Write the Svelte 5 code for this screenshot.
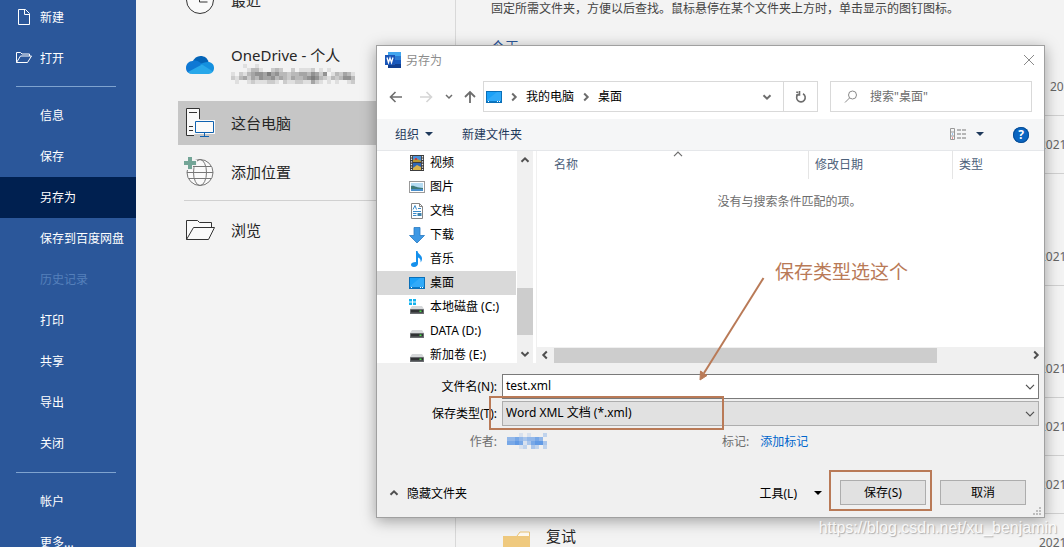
<script>
  const topItems = [
    { label: "新建", icon: "new" },
    { label: "打开", icon: "open" }
  ];
  const midItems = [
    "信息",
    "保存",
    "另存为",
    "保存到百度网盘",
    "历史记录",
    "打印",
    "共享",
    "导出",
    "关闭"
  ];
  const bottomItems = ["帐户", "更多..."];

  const folders = [
    { name: "视频", icon: "video" },
    { name: "图片", icon: "picture" },
    { name: "文档", icon: "document" },
    { name: "下载", icon: "download" },
    { name: "音乐", icon: "music" },
    { name: "桌面", icon: "desktop" },
    { name: "本地磁盘 (C:)", icon: "system" },
    { name: "DATA (D:)", icon: "disk" },
    { name: "新加卷 (E:)", icon: "disk" }
  ];

  // Recent folders, one list per day group.
  const recents = [
    [{ date: "2021" }, { date: "2021" }],
    [{ date: "2021" }],
    [{ date: "2021" }, { date: "2021" }, { date: "2021" }, { name: "复试", date: "2021" }]
  ];

  // Each digit is the darkness of one block, 0 is empty.
  const mailBlocks = [
    "0001001000000000000000000000000",
    "0000133100232002011120101000000",
    "1021345546453323344354250132431",
    "2134243544534324334565321323553",
    "0100121112210211221142101010012"
  ];
  const authorBlocks = [
    "0001010002",
    "4454344540",
    "5565135663",
    "0001203202"
  ];

  let current = "另存为";
  let folder = "桌面";
  let fileName = "test.xml";
  let fileType = "xml";
  let search = "";
</script>

{#snippet mosaic(rows, color)}
  <svg class="mosaic" width={rows[0].length * 4} height={rows.length * 4} aria-hidden="true">
    {#each rows as row, y}
      {#each row as level, x}
        <rect x={x * 4} y={y * 4} width="4" height="4" fill={color} opacity={level / 9} />
      {/each}
    {/each}
  </svg>
{/snippet}

{#snippet chevron(dir)}
  <svg class="chevron {dir}" width="10" height="10" viewBox="0 0 10 10" aria-hidden="true">
    <path d="M1.500 3.200 5 6.700 8.500 3.200" fill="none" stroke="currentColor" stroke-width="2" />
  </svg>
{/snippet}

{#snippet thin()}
  <svg class="thin" width="10" height="6" viewBox="0 0 10 6" aria-hidden="true">
    <path d="M1 .8 5 4.800 9 .8" fill="none" stroke="currentColor" stroke-width="1.200" />
  </svg>
{/snippet}

{#snippet fileIcon(name)}
  <svg width="16" height="16" viewBox="0 0 16 16" aria-hidden="true">
    {#if name === "video"}
      <rect x="1" y="0" width="14" height="16" fill="#3c3c3c" />
      <path d="M2.500 1v14M13.500 1v14" stroke="#e8e8e8" stroke-width="1.300" stroke-dasharray="1.400 1.200" />
      <rect x="4" y="1" width="8" height="6" fill="#4a90d9" />
      <rect x="4" y="8" width="8" height="7" fill="#2f66b5" />
      <path d="M4 5l3-2 5 3v1H4z" fill="#b9962f" />
      <path d="M4 13l4-3 4 2v3H4z" fill="#d8b24a" />
      <rect x="6" y="3" width="2" height="2" fill="#c63a4c" />
    {:else if name === "picture"}
      <rect x=".5" y="2.500" width="15" height="11" fill="#fff" stroke="#9a9a9a" />
      <rect x="2" y="4" width="12" height="8" fill="#b5dcf3" />
      <path d="M2 7c3-1 5 2 12 2v3H2z" fill="#3e7a78" />
      <path d="M2 10h12v2H2z" fill="#4a8fcb" />
    {:else if name === "document"}
      <path d="M2.500.5h8l3 3v12h-11z" fill="#fff" stroke="#858585" />
      <path d="M10.500.5v3h3" fill="none" stroke="#858585" />
      <path d="M4 6.500 6 2.500l1.500 4M9 5.500h3M4 8.500h8M4 10.500h3.500M4 12.500h3.500" stroke="#3b8bc9" fill="none" />
      <rect x="8.500" y="10" width="4" height="3" fill="#3f83ad" />
    {:else if name === "download"}
      <path d="M5 .5h6v8h4.500L8 16 .5 8.500H5z" fill="#3d98e4" stroke="#2a7ac2" stroke-width=".8" />
    {:else if name === "music"}
      <path d="M7 0h1.500c.3 3 4.500 4 4.500 7.500 0 2-.7 3-1.500 4 .6-3-.8-4.500-2.500-5v6c0 2-1.800 3.500-4 3.500S2 15 2 13.500 4 11 7 11z" fill="#1590ec" />
    {:else if name === "desktop"}
      <rect x=".5" y="2.500" width="15" height="11" fill="#1ba1f8" stroke="#0a6fb8" />
      <path d="M1 11 11 3h4v9H1z" fill="#45b3fa" opacity=".5" />
      <path d="M1 12.500h14" stroke="#0a78c4" />
      <path d="M2 12.500h1M11 12.500h1M13 12.500h1" stroke="#fff" />
    {:else}
      {#if name === "system"}
        <path d="M0 0h3v2.500H0zM4 0h3v2.500H4zM0 3.500h3V6H0zM4 3.500h3V6H4z" fill="#13b2ee" />
      {/if}
      <path d="M3 7h10l2 3H1z" fill="#d6d8da" />
      <rect x="1" y="10" width="14" height="5" rx=".6" fill="#6a6d70" />
      <rect x="2" y="11" width="12" height="2.500" fill="#303234" />
      <rect x="10.500" y="11.500" width="2" height="1.500" fill="#48e04a" />
    {/if}
  </svg>
{/snippet}

<div class="backstage">
  <nav class="menu" aria-label="文件">
    {#each topItems as item}
      <button class="menu-item">
        <svg width="16" height="16" viewBox="0 0 16 16" fill="none" stroke="#fff" aria-hidden="true">
          {#if item.icon === "new"}
            <path d="M2.500.5h7l4 4v11h-11zM8.500.5v5h5" />
          {:else}
            <path d="M.5 12.500v-10h4l1.500 1.500h7.500v2M.5 12.500l4-6.500h11l-4 6.500z" />
          {/if}
        </svg>
        {item.label}
      </button>
    {/each}
    <hr />
    {#each midItems as label}
      <button
        class="menu-item"
        class:active={label === current}
        disabled={label === "历史记录"}
        on:click={() => (current = label)}>{label}</button>
    {/each}
    <hr />
    {#each bottomItems as label}
      <button class="menu-item">{label}</button>
    {/each}
  </nav>

  <section class="places">
    <button class="place">
      <svg width="30" height="30" viewBox="0 0 30 30" fill="none" stroke="#333" aria-hidden="true">
        <circle cx="15" cy="16" r="13.500" fill="#fafafa" />
        <path d="M14.500 6v12h8" />
      </svg>
      最近
    </button>
    <button class="place account">
      <svg width="30" height="30" viewBox="0 0 30 30" aria-hidden="true">
        <path d="M7.500 12C9 8 12 6 15.500 6c4 0 7 2 8 6l-5 5z" fill="#0364b8" />
        <path d="M7.500 11c3-1 5.500 0 7.500 1.500l6 4L6 23.500c-3 0-5-2.500-5-5.500 0-4 3-7 6.500-7z" fill="#0f78d4" />
        <path d="M23 12c3.500 0 6 2.500 6 6 0 1.500-.5 3-1.500 4L15 14.500c2-1.500 5-2.500 8-2.500z" fill="#1490df" />
        <path d="M3 22 17 14.500 28 21.500c-1 1.500-2.500 2.500-4.500 2.500H7c-1.500 0-3-1-4-2z" fill="#28a8ea" />
      </svg>
      <span>
        OneDrive - 个人
        {@render mosaic(mailBlocks, "#444")}
      </span>
    </button>
    <button class="place selected">
      <svg width="30" height="30" viewBox="0 0 30 30" fill="none" aria-hidden="true">
        <path d="M9 28.500H1.500v-27h13V12" fill="#fafafa" stroke="#333" />
        <path d="M4 5.500h8M4 19.500h4M4 23.500h4" stroke="#333" />
        <rect x="9" y="13" width="21" height="14" fill="#fafafa" />
        <path d="M10.500 14.500h18v11h-18zM19.500 26v3M15 29.500h9" stroke="#0f62b0" />
      </svg>
      这台电脑
    </button>
    <button class="place">
      <svg width="30" height="30" viewBox="0 0 30 30" fill="none" stroke="#777" aria-hidden="true">
        <circle cx="15" cy="16.500" r="13" fill="#fafafa" />
        <ellipse cx="15" cy="16.500" rx="6.500" ry="13" />
        <path d="M2 16.500h26M4 10.500h22M4 22.500h22" />
        <path d="M-2 4h4V0h6v4h4v6H8v4H2v-4h-4z" fill="#f3f3f3" stroke="none" />
        <path d="M-1 5h4V1h4v4h4v4H7v4H3V9h-4z" fill="#73a597" stroke="none" />
      </svg>
      添加位置
    </button>
    <hr />
    <button class="place">
      <svg width="30" height="30" viewBox="0 0 30 30" fill="none" stroke="#333" aria-hidden="true">
        <path d="M1.500 25.500V6.500h11l2 2h12v5M1.500 25.500l7-12h21l-6 12z" fill="#fafafa" />
      </svg>
      浏览
    </button>
  </section>

  <section class="recent">
    <p>固定所需文件夹，方便以后查找。鼠标悬停在某个文件夹上方时，单击显示的图钉图标。</p>
    <h2>今天</h2>
    {#each recents as group}
      <ul>
        {#each group as row}
          <li>
            {#if row.name}
              <svg width="27" height="24" viewBox="0 0 27 24" aria-hidden="true">
                <path d="M14 5l3-4h9.500v6" fill="#fffaf0" stroke="#ecc679" />
                <path d="M0 5h27v19H0z" fill="#efc97e" />
              </svg>
              <span class="name">{row.name}</span>
            {/if}
            <span class="date">{row.date}</span>
          </li>
        {/each}
      </ul>
    {/each}
  </section>

  <div class="dialog" role="dialog" aria-labelledby="dialog-title">
    <header class="titlebar">
      <svg width="16" height="16" viewBox="0 0 16 16" aria-hidden="true">
        <rect x="3" width="13" height="4" fill="#41a5ee" />
        <rect x="3" y="4" width="13" height="4" fill="#2b7cd3" />
        <rect x="3" y="8" width="13" height="4" fill="#185abd" />
        <rect x="3" y="12" width="13" height="4" fill="#103f91" />
        <rect y="3" width="10" height="10" fill="#1a56b8" />
        <path d="M2 5.500 3.500 10.500 5 6l1.500 4.500L8 5.500" fill="none" stroke="#fff" stroke-width="1.300" />
      </svg>
      <span id="dialog-title">另存为</span>
      <button class="close" aria-label="关闭">
        <svg width="12" height="12" viewBox="0 0 12 12" stroke="#8a8a8a"><path d="M1 1l10 10M11 1 1 11" /></svg>
      </button>
    </header>

    <div class="navbar">
      <div class="history">
        <button aria-label="后退">
          <svg width="14" height="14" viewBox="0 0 14 14" fill="none" stroke="#6d6d6d" stroke-width="1.600"><path d="M13 7H2M6.500 2 1.500 7l5 5" /></svg>
        </button>
        <button class="forward" aria-label="前进" disabled>
          <svg width="14" height="14" viewBox="0 0 14 14" fill="none" stroke="#d5d5d5" stroke-width="1.600"><path d="M1 7h11M7.500 2l5 5-5 5" /></svg>
        </button>
        <button class="pages" aria-label="最近浏览的位置">
          <svg width="8" height="6" viewBox="0 0 8 6" fill="none" stroke="#6d6d6d" stroke-width="1.500"><path d="M1 1l3 3 3-3" /></svg>
        </button>
        <button class="parent" aria-label="上移">
          <svg width="14" height="14" viewBox="0 0 14 14" fill="none" stroke="#6d6d6d" stroke-width="1.800"><path d="M7 13V2M2 7l5-5 5 5" /></svg>
        </button>
      </div>
      <div class="address">
        {@render fileIcon("desktop")}
        <span class="sep">{@render chevron("right")}</span>
        <a href="#computer">我的电脑</a>
        <span class="sep">{@render chevron("right")}</span>
        <a href="#desktop">桌面</a>
        <button class="drop" aria-label="以前的位置">{@render chevron("down")}</button>
        <button class="refresh" aria-label="刷新">
          <svg width="12" height="12" viewBox="0 0 12 12" fill="none" stroke="#6d6d6d" stroke-width="1.600">
            <path d="M8 2.800A4.300 4.300 0 1 1 3.500 3M3.200 1.200h-2M4.500 0v4H1" />
          </svg>
        </button>
      </div>
      <label class="search">
        <svg width="14" height="14" viewBox="0 0 14 14" fill="none" stroke="#8a8a8a"><circle cx="8.500" cy="5" r="4" /><path d="M5.500 8 1 12.500" /></svg>
        <input aria-label="搜索桌面" placeholder={'搜索"桌面"'} bind:value={search} />
      </label>
    </div>

    <div class="toolbar">
      <button>组织 <i class="caret"></i></button>
      <button>新建文件夹</button>
      <button class="view" aria-label="更改视图">
        <svg width="17" height="14" viewBox="0 0 17 14" fill="none">
          <path d="M.5 1.500h4v11h-4zM.5 5h4M.5 9h4" stroke="#999" />
          <path d="M7 3h4M12 3h4M7 7h4M12 7h4M7 11h4M12 11h4" stroke="#777" />
          <path d="M2 7h1" stroke="#3a8de0" /><path d="M2 11h1" stroke="#d33" />
        </svg>
        <i class="caret"></i>
      </button>
      <button class="help" aria-label="帮助">?</button>
    </div>

    <div class="browser">
      <ul class="tree">
        {#each folders as f}
          <li>
            <button class:picked={f.name === folder} on:click={() => (folder = f.name)}>
              {@render fileIcon(f.icon)}
              <span>{f.name}</span>
            </button>
          </li>
        {/each}
      </ul>
      <div class="vscroll">
        {@render chevron("up")}
        <span class="thumb"></span>
        {@render chevron("down")}
      </div>
      <div class="files">
        <table>
          <thead>
            <tr>
              <th class="col-name">名称 <span class="sort">{@render thin()}</span></th>
              <th class="col-date">修改日期</th>
              <th class="col-type">类型</th>
            </tr>
          </thead>
          <tbody>
            <tr><td colspan="3">没有与搜索条件匹配的项。</td></tr>
          </tbody>
        </table>
        <div class="hscroll">
          {@render chevron("left")}
          <span class="track"><span class="thumb"></span></span>
          {@render chevron("right")}
        </div>
      </div>
    </div>

    <div class="form">
      <label for="file-name">文件名(N):</label>
      <div class="combo">
        <input id="file-name" bind:value={fileName} />
        {@render thin()}
      </div>
      <label for="file-type">保存类型(T):</label>
      <div class="combo">
        <select id="file-type" bind:value={fileType}>
          <option value="xml">Word XML 文档 (*.xml)</option>
          <option value="docx">Word 文档 (*.docx)</option>
        </select>
        {@render thin()}
        <span class="mark type-mark"></span>
      </div>
      <span class="meta-label">作者:</span>
      <div class="meta">
        <span class="author">{@render mosaic(authorBlocks, "#1a6fe0")}</span>
        <span>标记:</span>
        <a href="#tags">添加标记</a>
      </div>
    </div>

    <footer>
      <button class="fold">{@render chevron("up")} 隐藏文件夹</button>
      <button class="tools">工具(L) <i class="caret"></i></button>
      <div class="save">
        <button class="push">保存(S)</button>
        <span class="mark save-mark"></span>
      </div>
      <button class="push">取消</button>
    </footer>

    <svg class="grip" width="9" height="9" viewBox="0 0 9 9" fill="#bdbdbd" aria-hidden="true">
      <path d="M6 0h2v2H6zM3 3h2v2H3zM6 3h2v2H6zM0 6h2v2H0zM3 6h2v2H3zM6 6h2v2H6z" />
    </svg>

    <svg class="arrow" width="68" height="106" viewBox="0 0 68 106" aria-hidden="true">
      <path d="M64.500 1 5 96" stroke="#b97a57" stroke-width="2" />
      <path d="M1 103 1.500 94 8 98.500z" fill="#b97a57" stroke="#b97a57" />
    </svg>
    <p class="note">保存类型选这个</p>
  </div>

  <p class="watermark">https://blog.csdn.net/xu_benjamin</p>
</div>

<style>
  :global(body) {
    font-family: "Noto Sans", "Noto Sans CJK SC", sans-serif;
    font-size: 12px;
    color: #000;
  }

  button {
    font: inherit;
    color: inherit;
    background: none;
    border: 0;
    padding: 0;
    text-align: left;
  }

  svg {
    display: block;
    flex: none;
  }

  a {
    color: inherit;
    text-decoration: none;
  }

  ul {
    list-style: none;
    margin: 0;
    padding: 0;
  }

  p {
    margin: 0;
  }

  .backstage {
    position: relative;
    display: flex;
    height: 100vh;
    overflow: hidden;
    background: #f3f3f3;
  }

  /* blue menu */
  .menu {
    flex: 0 0 136px;
    display: flex;
    flex-direction: column;
    margin-top: -4px;
    background: #2b579a;
    color: #fff;
  }

  .menu hr {
    flex: none;
    height: 1px;
    margin: 8px 20px 8px 16px;
    border: 0;
    background: #7fa3cf;
  }

  .menu-item {
    flex: none;
    display: flex;
    align-items: center;
    gap: 8px;
    box-sizing: border-box;
    height: 41px;
    padding: 0 0 2px 40px;
  }

  .menu-item:has(svg) {
    padding: 0 0 0 16px;
  }

  .menu-item:disabled {
    color: #5580bb;
  }

  .menu-item.active {
    background: #002050;
  }

  /* places */
  .places {
    flex: 0 0 320px;
    box-sizing: border-box;
    padding-left: 42px;
    margin-top: -22px;
    border-right: 1px solid #d8d8d8;
    color: #262626;
    font-size: 15px;
  }

  .place {
    display: flex;
    align-items: center;
    gap: 16px;
    box-sizing: border-box;
    width: 100%;
    height: 44px;
    padding: 0 0 2px 7px;
    margin-bottom: 5px;
  }

  .place svg {
    overflow: visible;
  }

  .place.account {
    padding-bottom: 0;
    margin: 21px 0 14px;
  }

  .account span {
    line-height: 18px;
  }

  .place.selected {
    background: #c6c6c6;
  }

  .places hr {
    height: 1px;
    margin: 6px 0 7px 6px;
    border: 0;
    background: #d0d0d0;
  }

  /* recent folders */
  .recent {
    flex: 1;
    padding-left: 35px;
    color: #444;
  }

  .recent p {
    line-height: 18px;
    white-space: nowrap;
  }

  .recent h2 {
    margin: 18px 0 0;
    font-size: 14px;
    font-weight: 400;
    line-height: 22px;
    color: #2b579a;
  }

  .recent ul + ul {
    margin-top: 54px;
  }

  .recent li {
    display: flex;
    align-items: center;
    gap: 16px;
    height: 57px;
    padding-left: 12px;
    border-bottom: 1px solid #d0d0d0;
  }

  .recent .name {
    margin-bottom: 14px;
    font-size: 15px;
    color: #262626;
  }

  .recent .date {
    flex: 0 0 25px;
    min-width: 0;
    margin-left: auto;
    color: #666;
  }

  .recent h2 + ul li:first-child .date {
    flex-basis: 14px;
  }

  /* dialog */
  .dialog {
    position: absolute;
    inset: 45px 19px 29px 376px;
    display: flex;
    flex-direction: column;
    border: 1px solid #a0a0a0;
    background: #f0f0f0;
    box-shadow: 0 3px 14px rgba(0, 0, 0, 0.35);
  }

  .titlebar {
    display: flex;
    align-items: center;
    gap: 5px;
    height: 28px;
    padding: 0 9px 7px 8px;
    background: #fff;
    color: #8c8c8c;
  }

  .close {
    margin-left: auto;
  }

  .navbar {
    display: flex;
    gap: 12px;
    padding: 0 12px 7px 0;
    background: #fff;
  }

  .history {
    display: flex;
    align-items: center;
    width: 94px;
    padding-left: 12px;
    margin-right: -12px;
  }

  .history button {
    flex: 0 0 30px;
  }

  .history .forward {
    flex-basis: 26px;
  }

  .history .pages {
    flex-basis: 18px;
  }

  .history .parent {
    flex-basis: 14px;
  }

  .address,
  .search {
    display: flex;
    align-items: center;
    box-sizing: border-box;
    height: 31px;
    border: 1px solid #d9d9d9;
  }

  .address {
    flex: 1;
    padding-left: 2px;
  }

  .address a {
    padding-bottom: 2px;
  }

  .sep {
    display: grid;
    place-items: center;
    width: 24px;
    color: #6d6d6d;
  }

  .drop {
    display: grid;
    place-items: center;
    width: 32px;
    height: 100%;
    margin-left: auto;
    color: #6d6d6d;
  }

  .refresh {
    display: grid;
    place-items: center;
    width: 34px;
    height: 100%;
    border-left: 1px solid #d9d9d9;
  }

  .search {
    flex: 0 0 202px;
    gap: 12px;
    min-width: 0;
    padding-left: 13px;
  }

  .search input {
    flex: 1;
    min-width: 0;
    padding: 0;
    border: 0;
    outline: 0;
    font: inherit;
  }

  .search input::placeholder {
    color: #6d6d6d;
  }

  .toolbar {
    display: flex;
    align-items: center;
    height: 31px;
    padding: 0 15px 0 18px;
    border-bottom: 1px solid #e5e7ea;
    background: #f5f6f7;
    color: #1e395b;
  }

  .toolbar button {
    display: flex;
    align-items: center;
    gap: 6px;
    padding-bottom: 2px;
    margin-right: 29px;
  }

  .caret {
    border: 4px solid transparent;
    border-top-color: currentColor;
    border-bottom: 0;
  }

  .toolbar .view {
    gap: 9px;
    margin-left: auto;
  }

  .toolbar .help {
    justify-content: center;
    width: 16px;
    height: 16px;
    padding: 0;
    margin: 0;
    border-radius: 50%;
    background: #0a66c2;
    box-shadow: inset 0 0 0 1px #0a4d94;
    color: #fff;
    font-weight: 700;
  }

  .browser {
    flex: 1;
    display: flex;
    min-height: 0;
    background: #fff;
  }

  .tree {
    flex: 0 0 139px;
    overflow: hidden;
  }

  .tree button {
    display: flex;
    align-items: center;
    gap: 5px;
    width: 100%;
    height: 24px;
    padding-left: 32px;
    white-space: nowrap;
  }

  .tree span {
    padding-bottom: 2px;
  }

  .tree .picked {
    background: #d9d9d9;
  }

  .vscroll {
    flex: 0 0 16px;
    display: flex;
    flex-direction: column;
    align-items: center;
    box-sizing: border-box;
    padding: 4px 0;
    margin: 0 3px 0 1px;
    background: #f0f0f0;
    color: #505050;
  }

  .vscroll .thumb {
    width: 100%;
    height: 47px;
    margin: auto 0 14px;
    background: #cdcdcd;
  }

  .chevron.up {
    transform: rotate(180deg);
  }

  .chevron.left {
    transform: rotate(90deg);
  }

  .chevron.right {
    transform: rotate(-90deg);
  }

  .files {
    flex: 1;
    display: flex;
    flex-direction: column;
    border-left: 1px solid #f0f0f0;
  }

  table {
    width: 100%;
    table-layout: fixed;
    border-collapse: collapse;
  }

  th {
    position: relative;
    height: 26px;
    padding: 0 0 2px 6px;
    border-right: 1px solid #e5e5e5;
    font-weight: 400;
    text-align: left;
    color: #4c607a;
  }

  th:last-child {
    border-right: 0;
  }

  .col-name {
    padding-left: 17px;
  }

  .col-date {
    width: 137px;
  }

  .col-type {
    width: 85px;
  }

  .sort {
    position: absolute;
    top: 0;
    left: 50%;
    color: #6d6d6d;
    transform: rotate(180deg);
  }

  td {
    padding: 13px 2px 0 0;
    text-align: center;
    color: #6d6d6d;
  }

  .hscroll {
    display: flex;
    align-items: center;
    gap: 4px;
    height: 16px;
    padding: 0 3px;
    margin-top: auto;
    background: #f0f0f0;
    color: #505050;
  }

  .track {
    flex: 1;
    height: 15px;
  }

  .track .thumb {
    display: block;
    width: 81%;
    height: 100%;
    background: #cdcdcd;
  }

  .form {
    display: grid;
    grid-template-columns: 120px 1fr;
    grid-template-rows: 26px 26px 28px;
    column-gap: 5px;
    row-gap: 1px;
    align-items: center;
    padding: 10px 5px 0 0;
  }

  .form label,
  .meta-label {
    text-align: right;
  }

  .meta-label,
  .meta {
    color: #6d6d6d;
  }

  .combo {
    position: relative;
  }

  .combo input,
  .combo select {
    display: block;
    box-sizing: border-box;
    width: 100%;
    height: 25px;
    padding: 0 24px 1px 3px;
    border: 1px solid #7a7a7a;
    border-radius: 0;
    outline: 0;
    font: inherit;
    color: #000;
    background: #fff;
    appearance: none;
  }

  .combo select {
    border-color: #adadad;
    background: #e1e1e1;
  }

  .combo .thin {
    position: absolute;
    top: 10px;
    right: 4px;
    color: #505050;
  }

  .meta {
    display: flex;
    align-items: center;
    gap: 11px;
  }

  .author {
    width: 204px;
    padding-left: 5px;
  }

  .meta a {
    color: #0066cc;
  }

  footer {
    display: flex;
    align-items: center;
    gap: 14px;
    padding: 25px 18px 12px 12px;
  }

  .fold {
    display: flex;
    align-items: center;
    gap: 8px;
    margin-right: auto;
  }

  .fold .chevron {
    color: #505050;
  }

  .tools {
    display: flex;
    align-items: center;
    gap: 17px;
    margin-right: 4px;
  }

  .push {
    display: block;
    box-sizing: border-box;
    width: 86px;
    height: 25px;
    padding-bottom: 2px;
    border: 1px solid #adadad;
    background: #e1e1e1;
    text-align: center;
  }

  .save {
    position: relative;
  }

  .mark {
    position: absolute;
    border: 2px solid #b97a57;
    pointer-events: none;
  }

  .type-mark {
    top: -5px;
    left: -13px;
    width: 231px;
    height: 30px;
  }

  .save-mark {
    inset: -10px -6px -6px -11px;
  }

  .grip {
    position: absolute;
    right: 2px;
    bottom: 1px;
  }

  .arrow {
    position: absolute;
    top: 231px;
    left: 322px;
  }

  .note {
    position: absolute;
    top: 212px;
    left: 398px;
    font-size: 19px;
    line-height: 28px;
    color: #b97a57;
  }

  .watermark {
    position: absolute;
    right: 7px;
    bottom: 9px;
    font-family: "Liberation Sans", sans-serif;
    font-size: 16px;
    line-height: 20px;
    color: #fff;
    opacity: 0.75;
    text-shadow: 1px 1px 1px #999;
  }
</style>
